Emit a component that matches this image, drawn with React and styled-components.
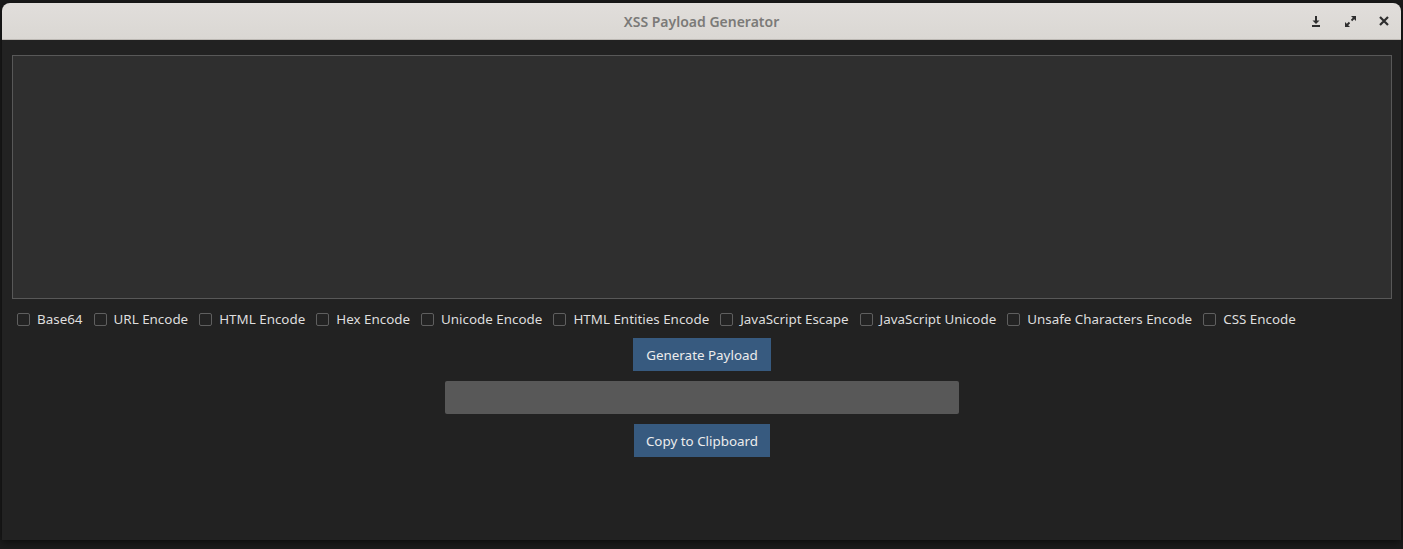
import React from "react";
import styled, { createGlobalStyle } from "styled-components";

const Global = createGlobalStyle`
  html, body { margin: 0; padding: 0; background: #1b1b1b; }
  body { font-family: "Noto Sans", "Open Sans", sans-serif; overflow: hidden; }
  * { box-sizing: border-box; }
`;

const Desktop = styled.div`
  width: 1403px;
  height: 549px;
  padding: 3px 0 0 2px;
  background: #1b1b1b;
`;

const Window = styled.div`
  width: 1399px;
  height: 537px;
  display: flex;
  flex-direction: column;
  background: #222222;
  border-radius: 8px 8px 0 0;
  overflow: hidden;
  box-shadow: 0 2px 8px rgba(0, 0, 0, 0.6);
`;

const TitleBar = styled.div`
  height: 37px;
  flex: none;
  position: relative;
  display: flex;
  align-items: center;
  justify-content: center;
  background: linear-gradient(#e1dedb, #dad7d3);
  border-bottom: 1px solid #bcb8b3;
`;

const Title = styled.div`
  font-size: 14px;
  font-weight: 600;
  color: #7b7a78;
`;

const Controls = styled.div`
  position: absolute;
  right: 0;
  top: 0;
  bottom: 0;
  display: flex;
  align-items: center;
`;

const Ctl = styled.div`
  width: 34px;
  height: 36px;
  display: flex;
  align-items: center;
  justify-content: center;
  color: #2e2e2e;
`;

const Content = styled.div`
  flex: 1;
  display: flex;
  flex-direction: column;
  align-items: center;
  padding: 15px 9px 0 10px;
`;

const TextArea = styled.div`
  width: 100%;
  height: 244px;
  background: #2f2f2f;
  border: 1px solid #585858;
`;

const Options = styled.div`
  align-self: flex-start;
  margin: 8px 0 7px 5px;
  height: 24px;
  display: flex;
  align-items: center;
  gap: 11px;
`;

const Option = styled.label`
  display: flex;
  align-items: center;
  gap: 7px;
  font-size: 13.4px;
  color: #dedede;
  white-space: nowrap;
`;

const Box = styled.span`
  width: 13px;
  height: 13px;
  border: 1px solid #5f5f5f;
  border-radius: 2px;
  background: #232323;
`;

const Button = styled.div`
  height: 33px;
  padding: 0 ${(p) => p.$pad}px;
  display: flex;
  align-items: center;
  background: #375a7f;
  color: #ececec;
  font-size: 13.4px;
`;

const Field = styled.div`
  width: 514px;
  height: 33px;
  margin: 10px 0;
  background: #585858;
  border-radius: 2px;
`;

const options = [
  "Base64",
  "URL Encode",
  "HTML Encode",
  "Hex Encode",
  "Unicode Encode",
  "HTML Entities Encode",
  "JavaScript Escape",
  "JavaScript Unicode",
  "Unsafe Characters Encode",
  "CSS Encode",
];

export default function App() {
  return (
    <>
      <Global />
      <Desktop>
        <Window>
          <TitleBar>
            <Title>XSS Payload Generator</Title>
            <Controls>
              <Ctl>
                <svg width="12" height="12" viewBox="0 0 12 12">
                  <path d="M6 1v6" stroke="currentColor" strokeWidth="2" />
                  <path d="M2.5 5.5L6 9l3.5-3.5z" fill="currentColor" />
                  <rect x="2" y="10" width="8" height="2" fill="currentColor" />
                </svg>
              </Ctl>
              <Ctl>
                <svg width="13" height="13" viewBox="0 0 13 13">
                  <path d="M7 1H12v5z" fill="currentColor" />
                  <path d="M6 12H1V7z" fill="currentColor" />
                  <path d="M10 3l-2.5 2.5M3 10l2.5-2.5" stroke="currentColor" strokeWidth="1.8" />
                </svg>
              </Ctl>
              <Ctl>
                <svg width="10" height="10" viewBox="0 0 10 10">
                  <path d="M1 1l8 8M9 1l-8 8" stroke="currentColor" strokeWidth="2.2" />
                </svg>
              </Ctl>
            </Controls>
          </TitleBar>
          <Content>
            <TextArea />
            <Options>
              {options.map((o) => (
                <Option key={o}>
                  <Box />
                  {o}
                </Option>
              ))}
            </Options>
            <Button $pad={13.5}>Generate Payload</Button>
            <Field />
            <Button $pad={12}>Copy to Clipboard</Button>
          </Content>
        </Window>
      </Desktop>
    </>
  );
}
